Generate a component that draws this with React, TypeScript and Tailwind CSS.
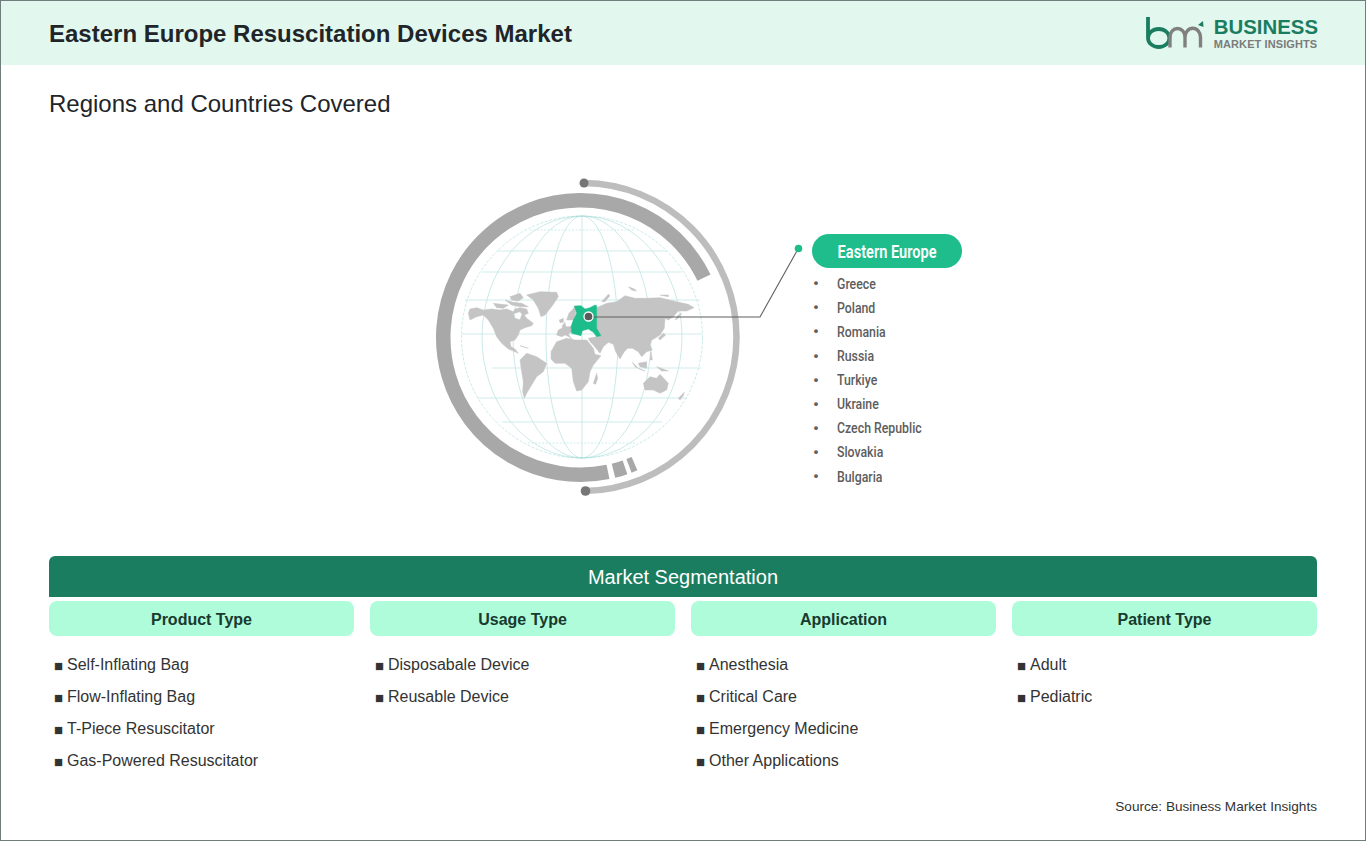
const countries = ['Greece', 'Poland', 'Romania', 'Russia', 'Turkiye', 'Ukraine', 'Czech Republic', 'Slovakia', 'Bulgaria'];

const segments = [
  { title: 'Product Type', items: ['Self-Inflating Bag', 'Flow-Inflating Bag', 'T-Piece Resuscitator', 'Gas-Powered Resuscitator'] },
  { title: 'Usage Type', items: ['Disposabale Device', 'Reusable Device'] },
  { title: 'Application', items: ['Anesthesia', 'Critical Care', 'Emergency Medicine', 'Other Applications'] },
  { title: 'Patient Type', items: ['Adult', 'Pediatric'] },
];

// globe rings share this centre
const cx = 580.5;
const cy = 337.5;

function pt(r: number, dx: number, sign: number) {
  const dy = Math.sqrt(r * r - dx * dx) * sign;
  return `${cx + dx} ${cy + dy}`;
}

function Logo() {
  return (
    <div className="flex items-center gap-[9px]">
      <svg width="60" height="34" viewBox="1146 16 60 34" fill="none">
        <path d="M1149 17V38A10.7 9 0 1 0 1170.4 38A10.7 9 0 0 0 1149 38" stroke="#1a7d5f" strokeWidth="3.8" />
        <path d="M1171 47.5V37A7.5 8.5 0 0 1 1186 37V47.5M1186 37A7.5 8.5 0 0 1 1201.5 37V47.5" stroke="#808080" strokeWidth="3.4" />
        <path d="M1199 25L1204 21L1204.5 27Z" fill="#1a7d5f" />
      </svg>
      <div className="flex flex-col">
        <span className="text-[20.4px] leading-[22px] font-bold text-[#1a7d5f]">BUSINESS</span>
        <span className="text-[11px] leading-[12px] font-bold text-[#7b7b7b] tracking-[0.1px]">MARKET INSIGHTS</span>
      </div>
    </div>
  );
}

function WorldMap() {
  return (
    <g fill="#c4c4c4" stroke="#c4c4c4" strokeWidth="1.5" strokeLinejoin="round">
      <g transform="translate(465 285) scale(0.3333)">
        <path
          fillRule="evenodd"
          d="M10 85L15 72L35 68L55 75L80 72L105 75L125 72L145 80L150 72L165 68L185 72L190 85L178 90L185 100L205 115L200 122L180 128L165 135L160 150L150 165L135 170L138 185L150 192L160 205L150 200L130 192L110 175L95 155L85 130L70 105L55 90L35 95L15 105ZM145 86L165 80L171 88L165 104L150 100Z"
        />
        <path d="M85 55L110 58L130 60L115 70L95 68Z" />
        <path d="M135 35L165 25L175 38L160 48L140 45Z" />
        <path d="M120 45L145 52L170 55L190 65L165 65L140 60Z" />
        <path d="M185 30L225 20L275 22L280 35L262 62L240 90L228 95L220 70L205 45Z" />
        <path d="M165 225L185 205L215 215L245 235L235 260L215 275L200 300L185 325L178 340L173 320L175 290L170 260Z" />
        <path d="M165 182L190 190L175 186Z" />
        <path d="M283 105L295 100L295 112L285 113Z" />
        <path d="M292 122L300 112L303 128L293 130Z" />
      </g>
      <g transform="translate(545 285) scale(0.3333)">
        <path d="M35 150L40 135L60 125L78 125L80 140L70 148L85 168L72 155L60 150L50 155Z" />
        <path d="M65 105L72 85L90 65L92 85L85 105Z" />
        <path d="M155 68L185 55L215 50L240 32L270 40L300 40L345 38L395 50L430 58L447 68L425 78L400 78L385 95L370 105L360 100L358 130L345 150L330 160L320 165L315 180L322 195L305 200L290 215L280 200L262 190L248 190L238 200L225 222L212 200L205 178L190 172L175 185L165 205L145 180L135 170L130 160L155 155L168 152L155 130Z" />
        <path d="M390 105L400 90L410 85L400 100Z" />
        <path d="M340 160L355 145L362 150L345 165Z" />
        <path d="M18 200L35 170L65 160L90 165L125 165L145 190L150 208L168 212L145 240L135 260L130 290L110 315L95 318L85 290L80 250L60 235L30 235L18 222Z" />
        <path d="M145 295L155 265L158 280L152 298Z" />
        <path d="M295 295L315 275L335 280L345 268L370 295L365 315L345 325L325 315L300 315Z" />
        <path d="M262 232L280 250L300 258L290 255L270 245Z" />
        <path d="M280 235L305 230L305 250L285 245Z" />
        <path d="M335 245L370 258L350 258Z" />
        <path d="M318 200L322 225L315 225Z" />
        <path d="M400 340L418 322L415 332L405 345Z" />
        <path d="M170 50L190 28L195 32L180 50Z" />
        <path d="M250 5L268 12L275 18L260 15Z" />
        <path d="M345 30L370 30L370 35Z" />
        <path
          d="M88 63L108 62L120 72L135 68L150 60L155 62L155 130L168 152L155 155L145 142L130 132L112 137L108 152L80 145L78 125L85 105L95 85Z"
          fill="#1cbd8a"
          stroke="#1cbd8a"
        />
      </g>
    </g>
  );
}

function Globe() {
  return (
    <svg width="375" height="330" viewBox="430 170 375 330" fill="none" className="shrink-0">
      <g stroke="#a6dcd8" strokeWidth="0.6">
        <ellipse cx="582" cy="337" rx="120.5" ry="121" strokeDasharray="3 1.5" />
        <ellipse cx="582" cy="337" rx="100" ry="121" />
        <ellipse cx="582" cy="337" rx="69" ry="121" />
        <ellipse cx="582" cy="337" rx="36" ry="121" />
        <path d="M582 216V458" />
      </g>
      <g stroke="#c3e9e6" strokeWidth="0.8">
        <path d="M497 251H667M482 272H682M465 300H700M462 334H702M492 368H701M477 398H687M502 422H662" />
        <path d="M530 230H635M528 443H636" strokeDasharray="2 1.5" />
      </g>
      <WorldMap />
      <path
        d={`M${pt(137.25, 123.5, -1)}A137.25 137.25 0 1 0 ${pt(137.25, 27.5, 1)}`}
        stroke="#a8a8a8"
        strokeWidth="14.5"
      />
      <path d={`M${pt(137.25, 33, 1)}A137.25 137.25 0 0 0 ${pt(137.25, 44.5, 1)}`} stroke="#a8a8a8" strokeWidth="14.5" />
      <path d={`M${pt(137.25, 48.5, 1)}A137.25 137.25 0 0 0 ${pt(137.25, 54, 1)}`} stroke="#a8a8a8" strokeWidth="14.5" />
      <path d="M584 183A154 154 0 0 1 736.5 337A154 154 0 0 1 585 491" stroke="#bdbdbd" strokeWidth="6.5" />
      <circle cx="584" cy="183" r="4.5" fill="#767676" />
      <circle cx="585.5" cy="491" r="4.8" fill="#767676" />
      <path d="M592 317H760L798 249" stroke="#5f5f5f" strokeWidth="1.1" />
      <circle cx="588.5" cy="316.5" r="4.5" fill="#5a5a5a" stroke="#ffffff" strokeWidth="1.3" />
      <circle cx="798.5" cy="248.5" r="3.8" fill="#1fbd8c" />
    </svg>
  );
}

export default function App() {
  return (
    <div className="w-[1366px] h-[841px] border border-[#6f7d7d] bg-white text-[#212529] font-['Liberation_Sans',Arial,sans-serif]">
      <header className="h-[64px] bg-[#e2f8ef] flex items-center justify-between pl-[48px] pr-[47px]">
        <h1 className="pt-[2px] text-[24px] font-bold text-[#212529]">Eastern Europe Resuscitation Devices Market</h1>
        <Logo />
      </header>

      <div className="px-[48px]">
        <h2 className="mt-[25px] text-[24px] leading-[28px] text-[#212529]">Regions and Countries Covered</h2>

        <div className="mt-[52px] ml-[381px] flex h-[386px]">
          <Globe />
          <div className="ml-[7px] w-[150px] mt-[64px] font-['Roboto',sans-serif]">
            <div className="h-[34px] rounded-full bg-[#1fbd8c] text-white text-[18px] font-semibold flex items-center justify-center">
              <span className="scale-x-[0.81]">Eastern Europe</span>
            </div>
            <ul className="mt-[3.5px] text-[15px] font-medium text-[#5d5d5d]">
              {countries.map((c) => (
                <li key={c} className="h-[24.1px] flex items-center pt-[1px]">
                  <span className="w-[25px] pl-[1px] text-[17px]">•</span>
                  <span className="origin-left scale-x-[0.82]">{c}</span>
                </li>
              ))}
            </ul>
          </div>
        </div>

        <div className="h-[41px] rounded-t-[6px] bg-[#1a7d5f] text-white text-[20px] flex items-center justify-center">
          Market Segmentation
        </div>
        <div className="mt-[4px] grid grid-cols-4 gap-x-[16px]">
          {segments.map((s) => (
            <div key={s.title}>
              <div className="h-[35px] pt-[2px] rounded-[8px] bg-[#aefcd9] flex items-center justify-center text-[16px] font-bold text-[#193a2f]">
                {s.title}
              </div>
              <ul className="mt-[13px] pl-[5px] text-[16px] text-[#333333]">
                {s.items.map((item) => (
                  <li key={item} className="h-[32px] flex items-center">
                    <span className="w-[13px] pt-[2px] text-[15px]">■</span>
                    {item}
                  </li>
                ))}
              </ul>
            </div>
          ))}
        </div>
        <p className="mt-[20px] text-right text-[13.6px] text-[#333333]">Source: Business Market Insights</p>
      </div>
    </div>
  );
}
